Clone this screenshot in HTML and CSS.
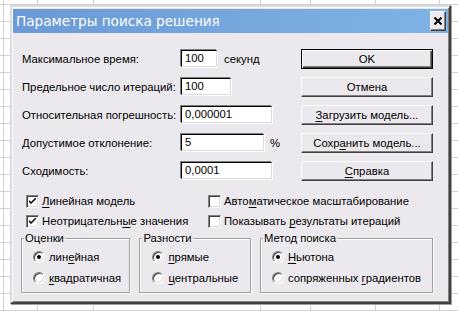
FILE: index.html
```html
<!DOCTYPE html>
<html>
<head>
<meta charset="utf-8">
<link rel="stylesheet" href="styles.css">
</head>
<body>
<div class="dialog">
  <div class="titlebar">
    <span class="title">Параметры поиска решения</span>
    <span class="close"><svg width="8" height="8" viewBox="0 0 8 8"><path d="M0.5 0.5 L7.5 7.5 M7.5 0.5 L0.5 7.5" stroke="#000" stroke-width="2" fill="none"/></svg></span>
  </div>
  <div class="content">
    <div class="top">
      <div class="fields">
        <div class="row"><span class="lbl">Максимальное время:</span><span class="input w1">100</span><span class="suffix">секунд</span></div>
        <div class="row"><span class="lbl">Предельное число итераций:</span><span class="input w2">100</span></div>
        <div class="row"><span class="lbl">Относительная погрешность:</span><span class="input w3">0,000001</span></div>
        <div class="row"><span class="lbl">Допустимое отклонение:</span><span class="input w4">5</span><span class="suffix pct">%</span></div>
        <div class="row"><span class="lbl">Сходимость:</span><span class="input w3">0,0001</span></div>
      </div>
      <div class="buttons">
        <div class="btn default"><span>OK</span></div>
        <div class="btn"><span>Отмена</span></div>
        <div class="btn"><span><u>З</u>агрузить модель...</span></div>
        <div class="btn"><span>Сохр<u>а</u>нить модель...</span></div>
        <div class="btn"><span><u>С</u>правка</span></div>
      </div>
    </div>
    <div class="checks">
      <div class="check"><span class="cb on"><svg width="7" height="7" viewBox="0 0 7 7"><path d="M0 2 L0 4 L2 6 L7 1 L7 -1 L2 4 Z" fill="#000"/></svg></span><span><u>Л</u>инейная модель</span></div>
      <div class="check"><span class="cb"></span><span>Авто<u>м</u>атическое масштабирование</span></div>
      <div class="check"><span class="cb on"><svg width="7" height="7" viewBox="0 0 7 7"><path d="M0 2 L0 4 L2 6 L7 1 L7 -1 L2 4 Z" fill="#000"/></svg></span><span>Неотрицательн<u>ы</u>е значения</span></div>
      <div class="check"><span class="cb"></span><span>Показывать <u>р</u>езультаты итераций</span></div>
    </div>
    <div class="groups">
      <fieldset class="group g1">
        <legend>Оценки</legend>
        <div class="radio"><span class="rb on"></span><span>лин<u>е</u>йная</span></div>
        <div class="radio"><span class="rb"></span><span><u>к</u>вадратичная</span></div>
      </fieldset>
      <fieldset class="group g2">
        <legend>Разности</legend>
        <div class="radio"><span class="rb on"></span><span><u>п</u>рямые</span></div>
        <div class="radio"><span class="rb"></span><span><u>ц</u>ентральные</span></div>
      </fieldset>
      <fieldset class="group g3">
        <legend>Метод поиска</legend>
        <div class="radio"><span class="rb on"></span><span><u>Н</u>ьютона</span></div>
        <div class="radio"><span class="rb"></span><span>сопряженных <u>г</u>радиентов</span></div>
      </fieldset>
    </div>
  </div>
</div>
</body>
</html>
```
FILE: styles.css
```css
* { box-sizing: border-box; }
html, body { margin: 0; padding: 0; }
body {
  width: 458px;
  height: 311px;
  overflow: hidden;
  padding: 5px 0 0 10px;
  background-color: #fff;
  background-image:
    linear-gradient(#d0d0d0, #d0d0d0),
    linear-gradient(#d0d0d0, #d0d0d0),
    linear-gradient(#d0d0d0, #d0d0d0),
    linear-gradient(#d0d0d0, #d0d0d0),
    linear-gradient(#d0d0d0, #d0d0d0),
    linear-gradient(#d0d0d0, #d0d0d0),
    linear-gradient(#d0d0d0, #d0d0d0),
    repeating-linear-gradient(to bottom, transparent 0, transparent 4px, #d0d0d0 4px, #d0d0d0 5px, transparent 5px, transparent 17px);
  background-size: 1px 100%, 1px 100%, 1px 100%, 1px 100%, 1px 100%, 1px 100%, 1px 100%, 100% 100%;
  background-position: 3px 0, 37px 0, 93px 0, 260px 0, 310px 0, 375px 0, 439px 0, 0 0;
  background-repeat: no-repeat;
}
.dialog {
  width: 441px;
  height: 299px;
  background: #ece9ee;
  border: 2px solid;
  border-color: #dcdce0 #404040 #404040 #dcdce0;
  box-shadow: inset 1px 1px #fff, inset -1px -1px #808080, 1px 1px #a0a0a0;
  padding: 2px 1px 0 1px;
  font-family: "Liberation Sans", Arial, sans-serif;
  font-size: 11.3px;
  color: #000;
}
.titlebar {
  height: 24px;
  background: linear-gradient(to right, #6b9ad6, #7fb3e4);
  display: flex;
  align-items: center;
  justify-content: space-between;
  padding: 0 2px 0 3px;
}
.title {
  color: #fff;
  font-family: "DejaVu Sans", sans-serif;
  font-size: 13.6px;
  line-height: 18px;
}
.close {
  width: 16px;
  height: 20px;
  background: #ece9ee;
  border: 1px solid;
  border-color: #fff #404040 #404040 #fff;
  box-shadow: inset -1px -1px #808080;
  display: flex;
  align-items: center;
  justify-content: center;
}
.close svg { display: block; }
.content {
  padding: 16px 15px 0 9px;
}
.top {
  display: flex;
  justify-content: space-between;
}
.fields, .buttons {
  display: flex;
  flex-direction: column;
  gap: 8px;
}
.row {
  height: 20px;
  display: flex;
  align-items: center;
}
.lbl { width: 159px; white-space: nowrap; }
.input {
  height: 17px;
  background: #fff;
  border: 1px solid;
  border-color: #000 #dcdce0 #dcdce0 #000;
  box-shadow: 1px 1px #fff, -1px -1px #808080;
  padding: 0 3px;
  line-height: 15px;
  margin-top: -2px;
}
.w1 { width: 36px; }
.w2 { width: 50px; }
.w3 { width: 91px; }
.w4 { width: 83px; }
.suffix { margin-left: 7px; }
.pct { margin-left: 6px; }
.btn {
  width: 132px;
  height: 20px;
  border: 1px solid;
  border-color: #fff #404040 #404040 #fff;
  box-shadow: inset -1px -1px #808080;
  display: flex;
  align-items: center;
  justify-content: center;
  line-height: 14px;
}
.btn.default {
  border: 1px solid #000;
  box-shadow: inset 1px 1px #fff, inset -1px -1px #404040, inset -2px -2px #808080;
}
.checks {
  display: grid;
  grid-template-columns: 182px auto;
  padding-left: 4px;
  margin-top: 10px;
}
.check {
  height: 20px;
  display: flex;
  align-items: center;
  white-space: nowrap;
}
.cb {
  width: 13px;
  height: 13px;
  margin-right: 3px;
  background: #fff;
  border: 1px solid;
  border-color: #808080 #fff #fff #808080;
  box-shadow: inset 1px 1px #404040, inset -1px -1px #dcdce0;
  display: flex;
  align-items: center;
  justify-content: center;
}
.cb svg { display: block; }
.groups {
  display: flex;
  gap: 9px;
  margin-left: -1px;
}
.group {
  margin: 0;
  height: 62px;
  padding: 1px 0 0 0;
  border: 1px solid #a0a0a0;
  box-shadow: inset 1px 1px #fff, 1px 1px #fff;
  min-width: 0;
}
.group legend {
  padding: 0 1px;
  margin-left: 2px;
  line-height: 14px;
}
.g1 { width: 110px; }
.g2 { width: 112px; }
.g3 { width: 174px; }
.radio {
  height: 21px;
  display: flex;
  align-items: center;
  white-space: nowrap;
  padding-left: 11px;
}
.g2 .radio { padding-left: 12px; }
.rb {
  width: 12px;
  height: 12px;
  border-radius: 50%;
  margin-right: 4px;
  background: #fff;
  border: 1px solid;
  border-color: #808080 #fff #fff #808080;
  box-shadow: inset 1px 1px #404040, inset -1px -1px #dcdce0;
  display: flex;
  align-items: center;
  justify-content: center;
}
.rb.on::after {
  content: "";
  width: 4px;
  height: 4px;
  border-radius: 50%;
  background: #000;
}
u { text-decoration: underline; text-underline-offset: 2px; }
```
